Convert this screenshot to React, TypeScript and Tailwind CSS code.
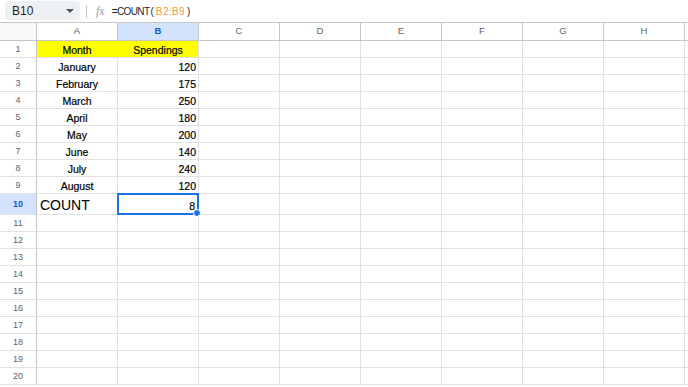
import React from "react";

const COLS = ["A", "B", "C", "D", "E", "F", "G", "H"];

type Row = {
  a?: string;
  b?: string;
};

const rows: Row[] = [
  { a: "Month", b: "Spendings" },
  { a: "January", b: "120" },
  { a: "February", b: "175" },
  { a: "March", b: "250" },
  { a: "April", b: "180" },
  { a: "May", b: "200" },
  { a: "June", b: "140" },
  { a: "July", b: "240" },
  { a: "August", b: "120" },
  { a: "COUNT", b: "8" },
  {}, {}, {}, {}, {}, {}, {}, {}, {}, {},
];

const font = { fontFamily: '"Liberation Sans", Arial, sans-serif' };

function TopBar() {
  return (
    <div className="h-[22px] flex items-center bg-white">
      <div className="ml-[5px] mt-[-1px] w-[75px] h-[19px] rounded-[4px] bg-[#eef1f4] flex items-center pl-[7px] pr-[6px]">
        <span className="text-[12px] text-[#1f1f1f] flex-1">B10</span>
        <span className="w-0 h-0 border-l-[4px] border-r-[4px] border-t-[4px] border-l-transparent border-r-transparent border-t-[#555]" />
      </div>
      <div className="ml-[6px] w-px h-[13px] bg-[#c7c7c7]" />
      <span
        className="ml-[9px] text-[12px] italic text-[#9aa0a6]"
        style={{ fontFamily: '"Liberation Serif", serif' }}
      >
        fx
      </span>
      <span className="ml-[7px] flex items-center text-[10px] text-[#1f1f1f]">
        <span className="tracking-[-0.6px]">=COUNT</span>
        <span className="ml-[1px]">(</span>
        <span className="ml-[2px] text-[#f29b38] tracking-[0.4px]">B2:B9</span>
        <span className="ml-[2px]">)</span>
      </span>
    </div>
  );
}

function HeaderRow() {
  return (
    <div className="flex h-[19px] border-t border-b border-[#c4c7c5] text-[9.5px] text-[#5f6368]">
      <div className="w-[37px] shrink-0 bg-[#f8f9fa] border-r border-[#c4c7c5]" />
      {COLS.map((c) => (
        <div
          key={c}
          className={
            "w-[81px] shrink-0 border-r border-[#c4c7c5] flex items-center justify-center " +
            (c === "B" ? "bg-[#d3e3fd] text-[#0b57d0] font-bold" : "bg-white")
          }
        >
          {c}
        </div>
      ))}
      <div className="flex-1 bg-white" />
    </div>
  );
}

function DataRow({ row, index }: { row: Row; index: number }) {
  const n = index + 1;
  const isHeader = n === 1;
  const isCount = n === 10;
  const h = isCount ? "h-[21px]" : "h-[17px]";
  return (
    <div className={"flex " + h}>
      <div
        className={
          "w-[37px] shrink-0 border-r border-b border-r-[#c4c7c5] border-b-[#e1e1e1] flex items-center justify-center pt-[1px] text-[9px] " +
          (isCount ? "bg-[#d3e3fd] text-[#0b57d0] font-bold" : "bg-white text-[#5f6368]")
        }
      >
        {n}
      </div>
      <div
        className={
          "w-[81px] shrink-0 border-r border-b border-b-[#e1e1e1] flex items-center leading-[16px] pt-[1px] [-webkit-text-stroke:0.2px_#000] " +
          (isHeader
            ? "bg-[#ffff00] border-r-[#ffff00] justify-center text-[10.5px]"
            : isCount
            ? "border-r-[#e1e1e1] pl-[3px] text-[14px] pt-[2px] [-webkit-text-stroke:0px]"
            : "border-r-[#e1e1e1] justify-center text-[10.5px]")
        }
      >
        {row.a}
      </div>
      <div
        className={
          "relative w-[81px] shrink-0 border-r border-b border-b-[#e1e1e1] border-r-[#e1e1e1] flex items-center leading-[16px] pt-[1px] text-[10.5px] [-webkit-text-stroke:0.2px_#000] " +
          (isHeader ? "bg-[#ffff00] justify-center" : "justify-end pr-[2px]")
        }
      >
        {isCount && (
          <div className="absolute left-[-1px] top-[-1px] right-[-1px] bottom-[-1px] border-2 border-[#1a73e8]">
            <div className="absolute right-[-4px] bottom-[-4px] w-[6px] h-[6px] rounded-full bg-[#1a73e8] border border-white box-content" />
          </div>
        )}
        <span className={isCount ? "relative pt-[3px] pr-[1px]" : "relative"}>{row.b}</span>
      </div>
      {COLS.slice(2).map((c) => (
        <div key={c} className="w-[81px] shrink-0 border-r border-b border-[#e1e1e1]" />
      ))}
      <div className="flex-1 border-b border-[#e1e1e1]" />
    </div>
  );
}

export default function App() {
  return (
    <div className="w-[688px] h-[387px] overflow-hidden bg-white text-black" style={font}>
      <TopBar />
      <HeaderRow />
      {rows.map((r, i) => (
        <DataRow key={i} row={r} index={i} />
      ))}
    </div>
  );
}
